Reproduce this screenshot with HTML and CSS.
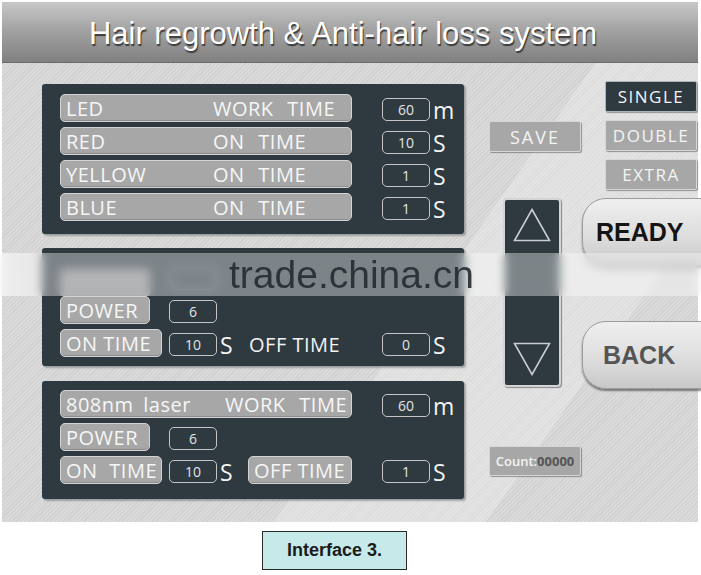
FILE: index.html
```html
<!DOCTYPE html>
<html lang="en">
<head>
  <meta charset="UTF-8" />
  <meta name="viewport" content="width=device-width, initial-scale=1.0"/>
  <title>Hair regrowth &amp; Anti-hair loss system</title>
  <link rel="stylesheet" href="styles.css">
</head>
<body>
  <div class="screen">
    <div class="title">Hair regrowth &amp; Anti-hair loss system</div>

    <div class="main">
      <div class="panels">
        <div class="panel panel-led">
          <div class="pill wide"><span class="tag">LED</span><span class="words">WORK TIME</span></div>
          <div class="val">60</div><div class="unit">m</div>

          <div class="pill wide"><span class="tag">RED</span><span class="words">ON TIME</span></div>
          <div class="val">10</div><div class="unit">S</div>

          <div class="pill wide"><span class="tag">YELLOW</span><span class="words">ON TIME</span></div>
          <div class="val">1</div><div class="unit">S</div>

          <div class="pill wide"><span class="tag">BLUE</span><span class="words">ON TIME</span></div>
          <div class="val">1</div><div class="unit">S</div>
        </div>

        <div class="panel panel-two">
          <div class="pill short hidden-row"></div>
          <div class="val short-val hidden-row"></div>
          <div class="row-end"></div>

          <div class="pill short">POWER</div>
          <div class="val short-val">6</div>
          <div class="row-end"></div>

          <div class="pill mid">ON TIME</div>
          <div class="val short-val">10</div>
          <div class="unit">S</div>
          <div class="plain">OFF TIME</div>
          <div class="val">0</div><div class="unit">S</div>
        </div>

        <div class="panel panel-laser">
          <div class="pill wide"><span class="tag tag-laser">808nm laser</span><span class="words">WORK TIME</span></div>
          <div class="val">60</div><div class="unit">m</div>

          <div class="pill short">POWER</div>
          <div class="val short-val">6</div>
          <div class="row-end"></div>

          <div class="pill mid spaced">ON TIME</div>
          <div class="val short-val">10</div>
          <div class="unit">S</div>
          <div class="pill off">OFF TIME</div>
          <div class="val">1</div><div class="unit">S</div>
        </div>
      </div>

      <div class="controls">
        <div class="ctl-top">
          <div class="key key-save">SAVE</div>
          <div class="modes">
            <div class="key key-on">SINGLE</div>
            <div class="key">DOUBLE</div>
            <div class="key">EXTRA</div>
          </div>
        </div>

        <div class="ctl-mid">
          <div class="arrows">
            <svg width="38" height="34" viewBox="0 0 38 34"><polygon points="19,1.5 36.5,32.5 1.5,32.5" fill="none" stroke="#c9cdd0" stroke-width="1.6"/></svg>
            <svg width="38" height="34" viewBox="0 0 38 34"><polygon points="1.5,1.5 36.5,1.5 19,32.5" fill="none" stroke="#c9cdd0" stroke-width="1.6"/></svg>
          </div>
          <div class="big-keys">
            <div class="big ready">READY</div>
            <div class="big back">BACK</div>
          </div>
        </div>

        <div class="count">Count:<span>00000</span></div>
      </div>
    </div>

    <div class="watermark"><span>trade.china.cn</span></div>
  </div>

  <div class="caption">Interface 3.</div>
</body>
</html>
```

FILE: styles.css
```css
body {
  margin: 0;
  background-color: #ffffff;
  font-family: 'Open Sans', sans-serif;
  overflow: hidden;
}

.screen {
  position: relative;
  width: 696px;
  height: 520px;
  margin: 2px 0 0 2px;
  background:
    linear-gradient(125deg, rgba(255,255,255,0) 60%, rgba(255,255,255,0.25) 60%, rgba(255,255,255,0.25) 80%, rgba(255,255,255,0) 80%),
    repeating-linear-gradient(-45deg, #dadada 0 2px, #d0d0d0 2px 3px);
}

.title {
  height: 56px;
  padding: 4px 14px 0 0;
  display: flex;
  align-items: center;
  justify-content: center;
  background: linear-gradient(#c8c8c8, #a4a4a4 45%, #808080);
  border-bottom: 1px solid #6c6c6c;
  font-family: 'Liberation Sans', Arial, sans-serif;
  font-size: 31px;
  color: #ffffff;
  text-shadow: 1px 2px 1px #3a3a3a;
}

.main {
  display: flex;
}

/* left side: three setting panels */
.panels {
  display: flex;
  flex-direction: column;
  gap: 14px;
  padding: 21px 0 0 40px;
}

.panel {
  width: 422px;
  box-sizing: border-box;
  display: grid;
  grid-template-columns: 102px 7px 48px 31px 104px 30px 48px 1fr;
  grid-auto-rows: 30px;
  row-gap: 3px;
  align-items: center;
  padding-left: 18px;
  background-color: #2e3940;
  border-radius: 3px;
  box-shadow: 1px 1px 0 #9aa0a4, 2px 2px 2px rgba(0,0,0,0.25);
  color: #f2f2f2;
}

.panel-led { padding-top: 9px; padding-bottom: 12px; }
.panel-two { padding-top: 14px; padding-bottom: 8px; }
.panel-laser { padding-top: 8px; padding-bottom: 14px; margin-top: 1px; }

.pill {
  height: 28px;
  box-sizing: border-box;
  display: flex;
  align-items: center;
  padding-left: 5px;
  background-color: #a7a7a7;
  border: 1px solid #d4d4d4;
  border-radius: 5px;
  box-shadow: inset 0 -1px 0 #8c8c8c;
  font-size: 20px;
  letter-spacing: 0.5px;
  color: #f6f6f6;
  white-space: nowrap;
  overflow: hidden;
}

.pill.wide { grid-column: 1 / 6; }
.pill.short { grid-column: 1 / 2; width: 90px; }
.pill.mid { grid-column: 1 / 2; }
.pill.off { grid-column: 5 / 6; }
.pill.spaced { word-spacing: 6px; }

.hidden-row {
  margin-top: 12px;
  opacity: 0.7;
}

.tag { width: 147px; }
.tag-laser { width: 159px; word-spacing: 4px; }
.words { word-spacing: 8px; }

.plain {
  grid-column: 5 / 6;
  font-size: 20px;
  letter-spacing: 0.5px;
  padding-left: 1px;
  margin-top: 3px;
}

.val {
  grid-column: 7 / 8;
  height: 23px;
  margin-top: 3px;
  box-sizing: border-box;
  display: flex;
  align-items: center;
  justify-content: center;
  border: 1.5px solid #c6c6c6;
  border-radius: 5px;
  font-size: 14px;
  color: #e4e4e4;
}

.val.short-val { grid-column: 3 / 4; }

.unit {
  font-size: 23px;
  line-height: 1;
  padding-left: 3px;
  margin-top: 5px;
  color: #f4f4f4;
}

.row-end { grid-column: 8 / 9; }

/* right side: mode keys, arrows and big keys */
.controls {
  padding-top: 18px;
}

.ctl-top {
  display: flex;
}

.key {
  width: 92px;
  height: 31px;
  box-sizing: border-box;
  display: flex;
  align-items: center;
  justify-content: center;
  background-color: #a7a7a7;
  border: 1px solid #d6d6d6;
  border-radius: 2px;
  box-shadow: 1px 1px 1px rgba(0,0,0,0.35);
  font-size: 17px;
  letter-spacing: 1.5px;
  color: #f4f4f4;
}

.key-save {
  margin: 40px 0 0 25px;
  font-size: 18px;
  letter-spacing: 2px;
}

.key-on {
  background-color: #2e3940;
  border-color: #aeb3b6;
}

.modes {
  display: flex;
  flex-direction: column;
  gap: 8px;
  margin-left: 24px;
}

.ctl-mid {
  display: flex;
  margin-top: 8px;
}

.arrows {
  width: 58px;
  height: 189px;
  box-sizing: border-box;
  margin-left: 39px;
  padding: 8px 9px 9px;
  display: flex;
  flex-direction: column;
  justify-content: space-between;
  align-items: center;
  background-color: #2e3940;
  border: 2px solid #d2d4d6;
  border-radius: 4px;
  box-shadow: 1px 1px 1px rgba(0,0,0,0.4);
}

.big-keys {
  height: 191px;
  margin-left: 21px;
  display: flex;
  flex-direction: column;
  justify-content: space-between;
}

.big {
  width: 122px;
  height: 68px;
  box-sizing: border-box;
  display: flex;
  align-items: center;
  padding-left: 13px;
  background: linear-gradient(#efefef, #dcdcdc 60%, #c8c8c8);
  border: 1px solid #9c9c9c;
  border-radius: 24px 0 0 24px;
  box-shadow: 0 2px 2px rgba(0,0,0,0.45);
  font-family: 'Liberation Sans', Arial, sans-serif;
  font-weight: bold;
  font-size: 25px;
}

.ready { color: #141414; }
.back { color: #555555; padding-left: 20px; }

.count {
  width: 92px;
  height: 30px;
  box-sizing: border-box;
  margin: 57px 0 0 25px;
  display: flex;
  align-items: center;
  justify-content: center;
  background-color: #a7a7a7;
  border: 1px solid #d6d6d6;
  border-radius: 2px;
  box-shadow: 1px 1px 1px rgba(0,0,0,0.35);
  font-size: 13px;
  font-weight: 600;
  color: #f4f4f4;
}

.count span {
  color: #555555;
  font-weight: bold;
}

/* watermark band laid over the screen */
.watermark {
  position: absolute;
  left: -2px;
  right: -8px;
  top: 251px;
  height: 43px;
  display: flex;
  align-items: center;
  padding-left: 229px;
  background: linear-gradient(90deg, rgba(255,255,255,0.6), rgba(255,255,255,0.38) 40px, rgba(255,255,255,0.38));
  backdrop-filter: blur(5px);
  font-family: 'Liberation Sans', Arial, sans-serif;
  font-size: 39px;
  color: rgba(38, 46, 52, 0.92);
}

.caption {
  width: 145px;
  height: 39px;
  box-sizing: border-box;
  margin: 9px 0 0 262px;
  padding-left: 24px;
  display: flex;
  align-items: center;
  background-color: #c6e9ea;
  border: 1px solid #2a2a2a;
  font-family: 'Liberation Sans', Arial, sans-serif;
  font-weight: bold;
  font-size: 18px;
  color: #1c1c1c;
}
```
